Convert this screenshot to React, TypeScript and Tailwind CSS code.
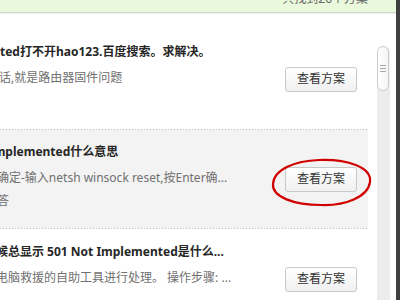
import React from "react";

type Item = {
  title: string;
  titleClass: string;
  desc: string;
  descClass: string;
  extra?: string;
  extraClass?: string;
  highlighted?: boolean;
};

const items: Item[] = [
  {
    title: "ted打不开hao123.百度搜索。求解决。",
    titleClass: "ml-[0px]",
    desc: "话,就是路由器固件问题",
    descClass: "ml-[-1px]",
  },
  {
    title: "Implemented什么意思",
    titleClass: "ml-[-11px]",
    desc: "确定-输入netsh winsock reset,按Enter确...",
    descClass: "ml-[-3px]",
    extra: "答",
    extraClass: "ml-[-3px]",
    highlighted: true,
  },
  {
    title: "候总显示 501 Not Implemented是什么...",
    titleClass: "ml-[-4px]",
    desc: "电脑救援的自助工具进行处理。 操作步骤: ...",
    descClass: "ml-[-4px]",
  },
];

const SolutionRow = ({ item }: { item: Item }) => (
  <div
    className={`relative flex h-[100px] items-center ${
      item.highlighted ? "bg-[#f3f3f3]" : "bg-white"
    }`}
  >
    {item.highlighted && (
      <>
        <div className="absolute left-0 right-0 top-0 h-px bg-[linear-gradient(to_right,#bdbdbd_1px,transparent_1px)] bg-[length:3px_1px]" />
        <div className="absolute left-0 right-0 bottom-0 h-px bg-[linear-gradient(to_right,#bdbdbd_1px,transparent_1px)] bg-[length:3px_1px]" />
      </>
    )}
    <div className="flex-1 self-start overflow-hidden whitespace-nowrap pt-[11px]">
      <div className={`text-[12px] font-bold leading-[24px] text-[#262626] ${item.titleClass}`}>
        {item.title}
      </div>
      <div className={`mt-[2px] text-[12px] leading-[24px] text-[#707070] ${item.descClass}`}>
        {item.desc}
      </div>
      {item.extra && (
        <div className={`text-[12px] leading-[22px] text-[#707070] ${item.extraClass}`}>
          {item.extra}
        </div>
      )}
    </div>
    <button className="mr-[11px] h-[25px] w-[72px] shrink-0 rounded-[3px] border border-[#c8c8c8] bg-gradient-to-b from-white to-[#f0f0f0] text-[12px] text-[#333]">
      查看方案
    </button>
  </div>
);

export default function App() {
  return (
    <div
      className="relative flex h-[300px] w-[400px] overflow-hidden bg-white"
      style={{ fontFamily: '"Noto Sans", "Noto Sans CJK SC", sans-serif' }}
    >
      <div className="flex w-[396px] flex-col">
        {/* result count bar */}
        <div className="h-[12px] shrink-0 overflow-hidden bg-[#eaf8dc] pr-[28px] text-right">
          <div className="mt-[-7px] text-[12px] leading-[12px] text-[#666]">共找到26个方案</div>
        </div>
        <div className="h-px shrink-0 bg-[#d4d4d4]" />
        <div className="h-[2px] shrink-0 bg-gradient-to-b from-[#ececec] to-white" />

        <div className="flex flex-1">
          <div className="w-[368px] pt-[14px]">
            {items.map((item, i) => (
              <SolutionRow key={i} item={item} />
            ))}
          </div>

          {/* scrollbar */}
          <div className="ml-[9px] flex w-[13px] flex-col pt-[31px]">
            <div className="flex flex-1 flex-col rounded-t-[6px] bg-[#ececec]">
              <div className="flex h-[45px] w-[12px] flex-col items-center justify-center gap-[2px] rounded-[6px] border border-[#cdcdcd] bg-gradient-to-r from-white to-[#f4f4f4]">
                <div className="h-px w-[6px] bg-[#a8a8a8]" />
                <div className="h-px w-[6px] bg-[#a8a8a8]" />
                <div className="h-px w-[6px] bg-[#a8a8a8]" />
              </div>
            </div>
          </div>
        </div>
      </div>
      <div className="w-[4px] bg-[#3f3f3f]" />

      {/* hand-drawn red mark around the second button */}
      <svg
        className="pointer-events-none absolute left-[269px] top-[157px]"
        width="106"
        height="52"
        viewBox="0 0 106 52"
      >
        <path
          d="M50 3 C78 2 103 10 101 25 C99 40 76 49 52 48 C25 48 3 40 4 27 C5 12 26 4 50 3 Z"
          fill="none"
          stroke="#d10000"
          strokeWidth="2.2"
        />
      </svg>
    </div>
  );
}
